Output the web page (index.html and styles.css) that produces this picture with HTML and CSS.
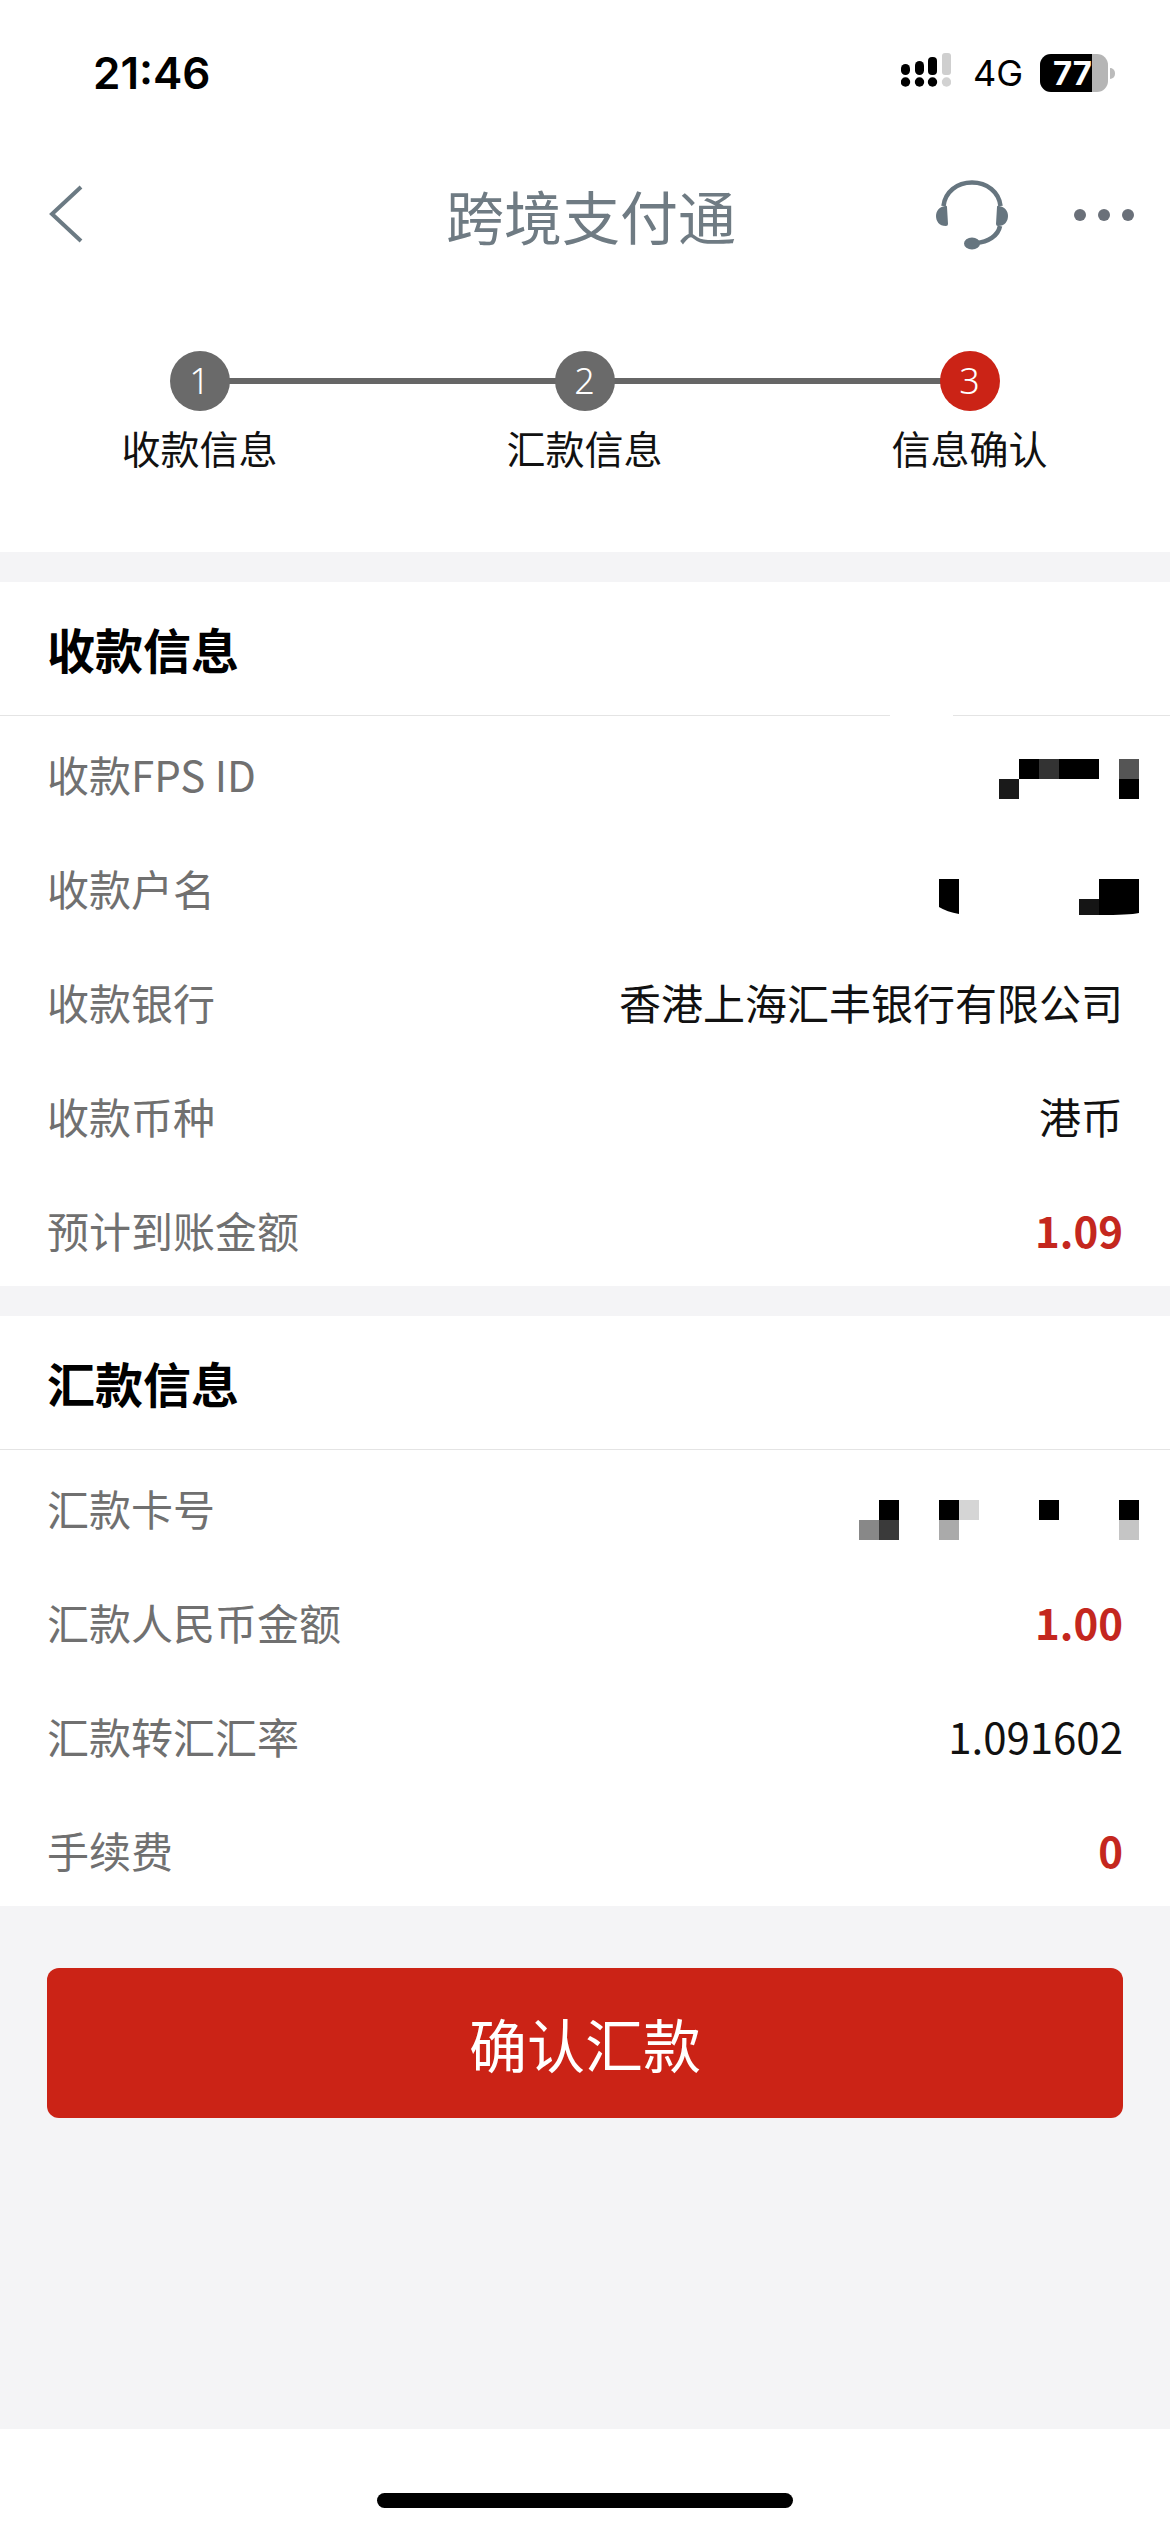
FILE: index.html
```html
<!DOCTYPE html>
<html lang="zh-CN">
<head>
    <meta charset="utf-8">
    <meta name="viewport" content="width=device-width, initial-scale=1">
    <title>跨境支付通</title>
    <link rel="stylesheet" href="styles.css">
</head>
<body>
<div class="status-bar">
    <span class="time">21:46</span>
    <div class="status-right">
        <svg class="signal" width="50" height="34" viewBox="0 0 50 34">
            <rect x="0" y="11" width="9" height="11" rx="4.5" fill="#000"/>
            <rect x="14" y="8" width="9" height="14" rx="4.5" fill="#000"/>
            <rect x="27" y="4" width="9" height="18" rx="4" fill="#000"/>
            <rect x="41" y="0" width="9" height="22" rx="3" fill="#cfcfcf"/>
            <circle cx="4.5" cy="29" r="4.7" fill="#000"/>
            <circle cx="18.5" cy="29" r="4.7" fill="#000"/>
            <circle cx="31.5" cy="29" r="4.7" fill="#000"/>
            <circle cx="45.5" cy="29" r="4.7" fill="#d2d2d2"/>
        </svg>
        <span class="net">4G</span>
        <div class="battery">
            <div class="battery-body"><span class="battery-level">77</span></div>
            <div class="battery-tip"></div>
        </div>
    </div>
</div>

<div class="nav">
    <svg class="nav-back" width="36" height="58" viewBox="0 0 36 58">
        <path d="M33 2 L3 29 M3 29" fill="none"/>
        <path d="M33 2 L4 29 L33 56" fill="none" stroke="#6b7a83" stroke-width="4"/>
    </svg>
    <div class="nav-title">跨境支付通</div>
    <div class="nav-actions">
        <svg width="72" height="70" viewBox="0 0 72 70">
            <path d="M7.5 26 C9 12 21 2.5 36 2.5 S63 12 64.5 26" fill="none" stroke="#66757f" stroke-width="4.6"/>
            <path d="M9 26 C3 27 0 31 0 36 C0 41 3 46 10 46 Q12 46 12 44 L11 27 Q11 25 9 26Z" fill="#66757f"/>
            <path d="M63 26 C69 27 72 31 72 36 C72 41 69 46 62 46 Q60 46 60 44 L61 27 Q61 25 63 26Z" fill="#66757f"/>
            <path d="M64 46 C62 56 52 62 40 63" fill="none" stroke="#66757f" stroke-width="4.6"/>
            <ellipse cx="36" cy="63.5" rx="8" ry="6" fill="#66757f"/>
        </svg>
        <div class="more">
            <i></i><i></i><i></i>
        </div>
    </div>
</div>

<div class="steps">
    <div class="step">
        <div class="step-num">1</div>
        <div class="step-label">收款信息</div>
    </div>
    <div class="step">
        <div class="step-num">2</div>
        <div class="step-label">汇款信息</div>
    </div>
    <div class="step">
        <div class="step-num current">3</div>
        <div class="step-label">信息确认</div>
    </div>
</div>

<div class="main">
    <div class="card">
        <div class="card-title">收款信息<span class="rule-gap"></span></div>
        <div class="row">
            <span class="row-label">收款FPS ID</span>
            <svg class="mosaic mosaic-fps" width="140" height="40" viewBox="0 0 140 40">
                <rect x="20" y="0" width="20" height="20" fill="#000"/>
                <rect x="40" y="0" width="20" height="20" fill="#333"/>
                <rect x="60" y="0" width="40" height="20" fill="#000"/>
                <rect x="120" y="0" width="20" height="20" fill="#555"/>
                <rect x="0" y="20" width="20" height="20" fill="#1a1a1a"/>
                <rect x="120" y="20" width="20" height="20" fill="#000"/>
            </svg>
        </div>
        <div class="row">
            <span class="row-label">收款户名</span>
            <svg class="mosaic mosaic-name" width="200" height="36" viewBox="0 0 200 36">
                <path d="M0 0 H20 V35 Q8 33 0 28Z" fill="#000"/>
                <rect x="140" y="20" width="20" height="16" fill="#151515"/>
                <path d="M160 0 H200 V34 Q190 36 160 36Z" fill="#000"/>
            </svg>
        </div>
        <div class="row">
            <span class="row-label">收款银行</span>
            <span class="row-value">香港上海汇丰银行有限公司</span>
        </div>
        <div class="row">
            <span class="row-label">收款币种</span>
            <span class="row-value">港币</span>
        </div>
        <div class="row">
            <span class="row-label">预计到账金额</span>
            <span class="row-value amount">1.09</span>
        </div>
    </div>

    <div class="card">
        <div class="card-title">汇款信息</div>
        <div class="row">
            <span class="row-label">汇款卡号</span>
            <svg class="mosaic mosaic-card" width="280" height="40" viewBox="0 0 280 40">
                <rect x="20" y="0" width="20" height="20" fill="#000"/>
                <rect x="0" y="20" width="20" height="20" fill="#888"/>
                <rect x="20" y="20" width="20" height="20" fill="#3a3a3a"/>
                <rect x="80" y="0" width="20" height="20" fill="#000"/>
                <rect x="100" y="0" width="20" height="20" fill="#d5d5d5"/>
                <rect x="80" y="20" width="20" height="20" fill="#aaa"/>
                <rect x="180" y="0" width="20" height="20" fill="#000"/>
                <rect x="260" y="0" width="20" height="20" fill="#000"/>
                <rect x="260" y="20" width="20" height="20" fill="#c5c5c5"/>
            </svg>
        </div>
        <div class="row">
            <span class="row-label">汇款人民币金额</span>
            <span class="row-value amount">1.00</span>
        </div>
        <div class="row">
            <span class="row-label">汇款转汇汇率</span>
            <span class="row-value">1.091602</span>
        </div>
        <div class="row">
            <span class="row-label">手续费</span>
            <span class="row-value amount">0</span>
        </div>
    </div>

    <div class="confirm">确认汇款</div>
</div>

<div class="home-area">
    <div class="home-bar"></div>
</div>
</body>
</html>
```

FILE: styles.css
```css
* {box-sizing:border-box;}
html, body {margin:0; padding:0;}
body {
    width:1170px;
    min-height:2532px;
    display:flex;
    flex-direction:column;
    background:#fff;
    font-family:"Noto Sans CJK SC", "Noto Sans", sans-serif;
    color:#111;
}

/* status bar */
.status-bar {height:130px; display:flex; align-items:center; justify-content:space-between; padding:18px 55px 0 93px;}
.time {font-family:Inter, sans-serif; font-weight:600; font-size:44px; line-height:1; color:#000; margin-top:-2px;}
.status-right {display:flex; align-items:center;}
.signal {display:block; margin-right:22px; margin-top:-8px;}
.net {font-family:Inter, sans-serif; font-size:36px; line-height:1; color:#000; margin-right:17px; margin-top:-2px;}
.battery {display:flex; align-items:center; margin-top:-2px;}
.battery-body {width:68px; height:38px; border-radius:11px; overflow:hidden; background:#b5b5b5;}
.battery-level {display:block; width:52px; height:38px; background:#000; color:#fff; font-family:Inter, sans-serif; font-weight:700; font-size:33px; line-height:38px; text-align:right;}
.battery-tip {width:5px; height:11px; margin-left:2px; border-radius:0 6px 6px 0; background:#bbb;}

/* nav */
.nav {height:170px; display:grid; grid-template-columns:1fr auto 1fr; align-items:center; padding:0 36px 0 48px;}
.nav-back {display:block; margin-top:-2px;}
.nav-title {font-size:58px; line-height:1; color:#6f7b83;}
.nav-actions {display:flex; align-items:center; justify-content:flex-end; gap:66px;}
.nav-actions svg {display:block;}
.more {display:flex; gap:12px;}
.more i {display:block; width:12px; height:12px; border-radius:50%; background:#6a7079;}

/* steps */
.steps {position:relative; height:252px; display:grid; grid-template-columns:repeat(3, 385px); padding:51px 0 0 7px;}
.steps::before {content:""; position:absolute; left:200px; top:78px; width:770px; height:6px; background:#666;}
.step {position:relative; display:flex; flex-direction:column; align-items:center;}
.step-num {width:60px; height:60px; border-radius:50%; background:#6a6a6a; color:#fff; font-family:"Noto Sans", sans-serif; font-size:36px; font-weight:300; line-height:60px; text-align:center;}
.step-num.current {background:#cb2316;}
.step-label {margin-top:12px; font-size:39px; line-height:48px; color:#111;}

/* content */
.main {flex:1; display:flex; flex-direction:column; padding-top:30px; gap:30px; background:#f4f4f6;}
.card {background:#fff;}
.card-title {position:relative; height:134px; padding:0 47px; border-bottom:1px solid #e4e4e4; font-size:48px; font-weight:700; line-height:133px; color:#000;}
.rule-gap {position:absolute; left:890px; bottom:-1px; width:63px; height:1px; background:#fff;}
.row {height:114px; display:flex; align-items:center; justify-content:space-between; padding:0 47px; font-size:42px;}
.row-label {color:#707070;}
.row-value {color:#111;}
.amount {color:#c4271e; font-weight:700;}
.mosaic {display:block;}
.mosaic-fps {margin:12px -16px 0 0;}
.mosaic-name {margin:20px -16px 0 0;}
.mosaic-card {margin:26px -16px 0 0;}

.confirm {height:150px; margin:32px 47px 0; border-radius:12px; background:#cb2316; color:#fff; font-size:58px; line-height:150px; text-align:center;}

.home-area {height:103px; display:flex; justify-content:center; padding-top:64px; background:#fff;}
.home-bar {width:416px; height:15px; border-radius:8px; background:#000;}
```
